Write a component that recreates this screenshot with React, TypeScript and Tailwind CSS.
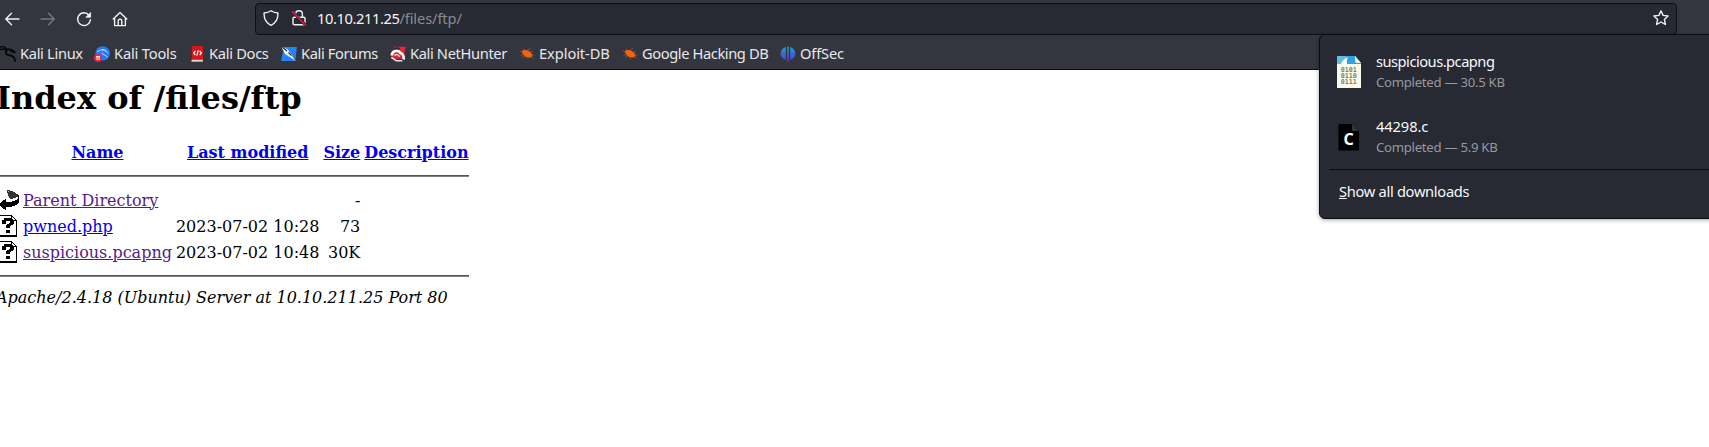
import React from "react";

const P = { fill: "none", stroke: "#f1f1f3", strokeWidth: 1.4, strokeLinecap: "round", strokeLinejoin: "round" } as const;

const Back = () => (
  <svg className="h-4 w-4" viewBox="0 0 16 16" {...P}><path d="M15 8H2M7.5 2.2 1.8 8l5.7 5.8" /></svg>
);
const Forward = () => (
  <svg className="h-4 w-4" viewBox="0 0 16 16" {...P} stroke="#76787e"><path d="M1 8h13M8.5 2.2 14.2 8l-5.7 5.8" /></svg>
);
const Reload = () => (
  <svg className="h-4 w-4" viewBox="0 0 16 16" {...P}>
    <path d="M12.9 4A6.4 6.4 0 1 0 14.4 8.6" />
    <path d="M14.6 1.8v4.4h-4.4z" fill="#f1f1f3" strokeWidth="0.8" />
  </svg>
);
const Home = () => (
  <svg className="h-4 w-4" viewBox="0 0 16 16" {...P}>
    <path d="M1.2 8 8 1.4 14.8 8M2.6 7v7.6h10.8V7M6.2 14.4V10a1.8 1.8 0 0 1 3.6 0v4.4" />
  </svg>
);
const Shield = () => (
  <svg className="h-4 w-4" viewBox="0 0 16 16" {...P}>
    <path d="M8 .8c2 1.5 4.400 2 6.900 2.200C15.200 8.500 13 13 8 15.300 3 13 .8 8.500 1.100 3 3.600 2.800 6 2.300 8 .8z" />
  </svg>
);
const Insecure = () => (
  <svg className="h-4 w-4" viewBox="0 0 16 16" {...P}>
    <path d="M4.600 7V4.200a3.400 3.400 0 0 1 6.800 0V7M3.300 7.200h9.400q1.300 0 1.300 1.300v4.800q0 1.500-1.500 1.500h-9q-1.500 0-1.500-1.500V8.500q0-1.300 1.300-1.300z" />
    <path d="M1.500 1.800 14.500 15" stroke="#272933" strokeWidth="3" />
    <path d="M1.500 1.800 14.500 15" stroke="#e3174c" strokeWidth="1.5" />
  </svg>
);
const Star = () => (
  <svg className="h-4 w-4" viewBox="0 0 16 16" {...P}>
    <path d="m8 .9 2.100 4.500 5 .6-3.700 3.400 1 5.100L8 12l-4.400 2.500 1-5.100L.9 6l5-.6z" />
  </svg>
);

const Dragon = () => (
  <svg className="h-4 w-4" viewBox="0 0 16 16" fill="none" stroke="#08090b" strokeLinecap="round">
    <path d="M0 1.200C2.500 0 5 .8 6.500 3.200M0 3.600c2.200-1 4.500-.6 6.500.6" strokeWidth="1.500" />
    <path d="M6.500 3.800c2.500-1.600 5-.6 7.500 1.600M10 4.800l4.800 1.600" strokeWidth="1.700" />
    <path d="M6.800 4.500c-2 2.200-.6 4.600 2.400 4.700 3.400.2 5.600 2.300 6 6" strokeWidth="1.900" />
  </svg>
);
const Tools = () => (
  <svg className="h-4 w-4" viewBox="0 0 16 16">
    <circle cx="8.700" cy="7.400" r="7.200" fill="#2979f2" />
    <path d="M3 6c3-2.500 6.500-2.800 9.500-.5M7.500 3.500c3 0 5 1.500 6.500 4M8 6.500c0 3 4 1.500 5.500 5" fill="none" stroke="#c3dcff" strokeWidth=".9" />
    <circle cx="4" cy="12" r="4" fill="#e5293d" />
    <path d="M2 10.700h4M3.100 10.700V14M5.100 10.700V14" stroke="#fff" strokeWidth="1" />
  </svg>
);
const Docs = () => (
  <svg className="h-4 w-4" viewBox="0 0 16 16">
    <path d="M2 0h12v13.500H2z" fill="#d5171d" />
    <path d="M1.600 0h1.300v14.700H1.600z" fill="#7a1420" />
    <path d="M2.500 13.700h11.400v2H2.500z" fill="#dcd9d4" />
    <path d="M6.300 5 4.600 7l1.700 2M10.700 5l1.700 2-1.700 2M9.200 4.300 7.800 9.600" fill="none" stroke="#fff" strokeWidth="1.200" />
  </svg>
);
const Forums = () => (
  <svg className="h-4 w-4" viewBox="0 0 16 16">
    <path d="M2.800.9h13.100l-1.700 14H.2z" fill="#2583fa" />
    <path d="M0 0 6.500 3.200 11 9l3.500 6-5-3.500L4 8z" fill="#f5f7fa" />
    <path d="M0 .1 6 5M7.500 6.500l3 3" stroke="#1b2430" strokeWidth="1.100" />
    <path d="m11 9 3.500 6" stroke="#6f7783" strokeWidth="1" />
  </svg>
);
const NetHunter = () => (
  <svg className="h-4 w-4" viewBox="0 0 16 16">
    <path d="M3.500.8h12.300l-2.600 12H1.500z" fill="#e32636" />
    <path d="M3.200 1.500 8.500 1.200l2 2.500-6.500 1.800z" fill="#292b33" />
    <path d="M1.800 9.500C2 4.500 8.500 3.500 10.300 6.800c2.800 1.200 4 4 3.200 6.700" fill="none" stroke="#fff" strokeWidth="2.700" />
    <path d="M4.500 9.500c2-1.800 4.300-.6 5 1.200" fill="none" stroke="#f2f2f4" strokeWidth="1.300" />
    <path d="m1.300 11.300 5 3.400h6" fill="none" stroke="#f2f2f4" strokeWidth="1.400" />
  </svg>
);
const Bug = () => (
  <svg className="h-4 w-4" viewBox="0 0 16 16">
    <path d="M3 5.300C4.200 3.500 8 3.500 10.500 5.500c2 1.600 3.300 3.600 2.700 5.200-2.600 1.500-6.200.7-8.200-1.200C3.600 8 2.800 6.600 3 5.300z" fill="#f26414" />
    <path d="M3.500 6 .8 4.800M5 4.500 4 2.500M8 4.300l3.500-2M11 6l3-.3M13 8.500l2.500 1M4 8.500 1.600 9.800M6 10.300 3.500 11.800M9 11.200l-1.200 1.600M12.500 10.300l1.700 2.300" fill="none" stroke="#b9501d" strokeWidth=".8" />
  </svg>
);
const OffSecLogo = () => (
  <svg className="h-4 w-4" viewBox="0 0 16 16">
    <defs>
      <linearGradient id="offsec" x1="0" y1="0" x2="0" y2="1">
        <stop offset="0" stopColor="#15a4c4" /><stop offset="1" stopColor="#5b35d6" />
      </linearGradient>
    </defs>
    <path d="M5.800.9v13.200C2.600 13 .6 10.600.6 7.500S2.600 2 5.800.9zM10.200.9c3.200 1.100 5.200 3.500 5.200 6.600s-2 5.500-5.200 6.600zM7.200.4h1.600v15H7.200z" fill="url(#offsec)" />
  </svg>
);

const ParentIcon = () => (
  <svg className="block h-[22px] w-5" viewBox="0 0 20 22" shapeRendering="crispEdges">
    <path d="M8 1h3v1h3v1h2v1h1v1h2v3h-2v1h-3v1h-3v-1h-1V8H9V5H8z" fill="#333" />
    <path d="M9 2h1v1H9zM8 4h1v1H8zM9 7h1v1H9z" fill="#bbb" />
    <path d="M1 14h1v-1h1v-1h1v-1h2v-1h1v3h6v-1h3v-1h2v-1h1V6h1v8h-1v1h-1v1h-2v1h-3v1H7v3H6v-1H4v-1H3v-1H2v-1H1z" fill="#000" />
  </svg>
);
const UnknownIcon = () => (
  <svg className="block h-[22px] w-5" viewBox="0 0 20 22" shapeRendering="crispEdges">
    <path d="M0 0h13v1h1v1h1v1h1v1h1v1h1v17H0z" fill="#000" />
    <path d="M1 1h11v5h5v14H1z" fill="#fff" />
    <path d="M13 2h1v1h1v1h1v1h-3z" fill="#fff" />
    <path d="M5 3h8v1h1v1h1v4h-1v1h-2v1h-1v2H7v-3h1V9h2V8h1V6H7v3H3V5h2zM7 15h4v3H7z" fill="#000" />
  </svg>
);

const PcapIcon = () => (
  <svg className="h-8 w-6" viewBox="0 0 24 32">
    <path d="M0 0h18l6 7v25H0z" fill="#fcfbe9" />
    <path d="M0 0h18l6 7v1H0z" fill="#2fa4e0" />
    <path d="M0 0h9v8H0z" fill="#65bce5" />
    <path d="M4 8c1-3 3-5 7-7-1 2-1.400 4-1 7z" fill="#fff" />
    <path d="m18 0 6 7h-4.500Q18 6.500 18 5z" fill="#e9f3e5" />
    <g fill="#77776f" fontFamily="DejaVu Sans Mono, monospace" fontSize="6.700" fontWeight="bold">
      <text x="3.700" y="16.200">0101</text>
      <text x="3.700" y="22.200">0110</text>
      <text x="3.700" y="28.200">0111</text>
    </g>
  </svg>
);
const CFileIcon = () => (
  <svg className="h-8 w-6" viewBox="0 0 24 32">
    <path d="M2.500 3H15l7 7v18.500q0 1-1 1H2.500q-1 0-1-1V4q0-1 1-1z" fill="#000" />
    <path d="M15 3v7h7z" fill="#343434" />
    <text x="6.400" y="23.800" fill="#fff" fontFamily="Noto Sans, sans-serif" fontWeight="700" fontSize="16">C</text>
  </svg>
);

const bookmarks = [
  { label: "Kali Linux", icon: <Dragon />, width: "w-[94px] tracking-[-0.32px]" },
  { label: "Kali Tools", icon: <Tools />, width: "w-[95px] tracking-[-0.18px]" },
  { label: "Kali Docs", icon: <Docs />, width: "w-[92px] tracking-[-0.3px]" },
  { label: "Kali Forums", icon: <Forums />, width: "w-[109px] tracking-[-0.36px]" },
  { label: "Kali NetHunter", icon: <NetHunter />, width: "w-[129px] tracking-[-0.36px]" },
  { label: "Exploit-DB", icon: <Bug />, width: "w-[103px] tracking-[-0.08px]" },
  { label: "Google Hacking DB", icon: <Bug />, width: "w-[158px] tracking-[-0.4px]" },
  { label: "OffSec", icon: <OffSecLogo />, width: "w-[80px] tracking-[-0.15px]" },
];

const files = [
  { name: "Parent Directory", date: "", size: "-", visited: true, icon: <ParentIcon /> },
  { name: "pwned.php", date: "2023-07-02 10:28", size: "73", visited: false, icon: <UnknownIcon /> },
  { name: "suspicious.pcapng", date: "2023-07-02 10:48", size: "30K", visited: true, icon: <UnknownIcon /> },
];

const downloads = [
  { name: "suspicious.pcapng", info: "Completed — 30.5 KB", icon: <PcapIcon />, tracking: "tracking-[-0.5px]" },
  { name: "44298.c", info: "Completed — 5.9 KB", icon: <CFileIcon />, tracking: "tracking-[-0.1px]" },
];

const Rule = () => (
  <tr>
    <td colSpan={5} className="p-px">
      <div className="my-2 h-0.5 border-t border-t-[#555] bg-[#808080]" />
    </td>
  </tr>
);

export default function App() {
  return (
    <div className="relative h-[447px] w-[1709px] overflow-hidden bg-white font-['Noto_Sans',sans-serif] text-[14.67px]">
      <header className="flex h-[70px] flex-col border-b border-[#0c0d10] bg-[#33363e] text-[#e8e8ea]">
        <div className="flex h-[35px] shrink-0 items-center pt-0.5">
          <nav className="flex w-[255px] shrink-0 items-center gap-5 pl-1">
            <Back /><Forward /><Reload /><Home />
          </nav>
          <div className="flex h-8 w-[1422px] shrink-0 items-center rounded-[4px] border border-[#0e0f14] bg-[#272933] pr-[7px] pb-px pl-[7px]">
            <Shield />
            <span className="ml-3 flex"><Insecure /></span>
            <span className="ml-[10px] flex-1 whitespace-nowrap pb-px text-[#8b8c92]"><span className="tracking-[-0.4px] text-[#f5f5f7]">10.10.211.25</span><span className="tracking-[-0.12px]">/files/ftp/</span></span>
            <Star />
          </div>
        </div>
        <div className="flex h-[34px] items-center whitespace-nowrap">
          {bookmarks.map((b) => (
            <div key={b.label} className={`flex shrink-0 items-center gap-1 ${b.width}`}>
              <span className="flex pt-1">{b.icon}</span><span className="pt-0.5">{b.label}</span>
            </div>
          ))}
        </div>
      </header>

      <main className="-ml-1 font-['DejaVu_Serif',serif] text-base leading-[19px] text-black">
        <h1 className="h-[68px] pt-[9px] text-[32px] leading-[38px] font-bold">Index of /files/ftp</h1>
        <table className="border-separate border-spacing-[2px] whitespace-nowrap">
          <tbody>
            <tr className="text-[#0000ee]">
              <th className="p-px"><div className="h-[22px] w-5" /></th>
              <th className="p-px underline">Name</th>
              <th className="p-px underline">Last modified</th>
              <th className="p-px underline">Size</th>
              <th className="p-px underline">Description</th>
            </tr>
            <Rule />
            {files.map((f) => (
              <tr key={f.name}>
                <td className="p-px">{f.icon}</td>
                <td className={f.visited ? "p-px text-[#551a8b] underline" : "p-px text-[#0000ee] underline"}>{f.name}</td>
                <td className="p-px text-right">{f.date}</td>
                <td className="p-px text-right">{f.size}</td>
                <td className="p-px" />
              </tr>
            ))}
            <Rule />
          </tbody>
        </table>
        <address className="whitespace-nowrap italic">Apache/2.4.18 (Ubuntu) Server at 10.10.211.25 Port 80</address>
      </main>

      <aside className="absolute top-[34px] left-[1319px] h-[185px] w-[400px] rounded-[6px] border border-[#0b0c10] bg-[#272933] text-[#f8f8fa] shadow-[0_1px_4px_rgba(0,0,0,0.35)]">
        <div className="flex flex-col pt-1">
          {downloads.map((d) => (
            <div key={d.name} className="flex h-[65px] items-center pl-[17px]">
              {d.icon}
              <div className="ml-[15px] flex flex-col pb-px">
                <span className={`leading-[22px] ${d.tracking}`}>{d.name}</span>
                <span className="text-[13.2px] leading-[21px] tracking-[-0.29px] text-[#97989e]">{d.info}</span>
              </div>
            </div>
          ))}
        </div>
        <div className="ml-[9px] h-px bg-[#0b0c10]" />
        <div className="flex h-[43px] items-center pb-px pl-[19px]"><span className="tracking-[-0.3px]"><span className="underline">S</span>how all downloads</span></div>
      </aside>
    </div>
  );
}
